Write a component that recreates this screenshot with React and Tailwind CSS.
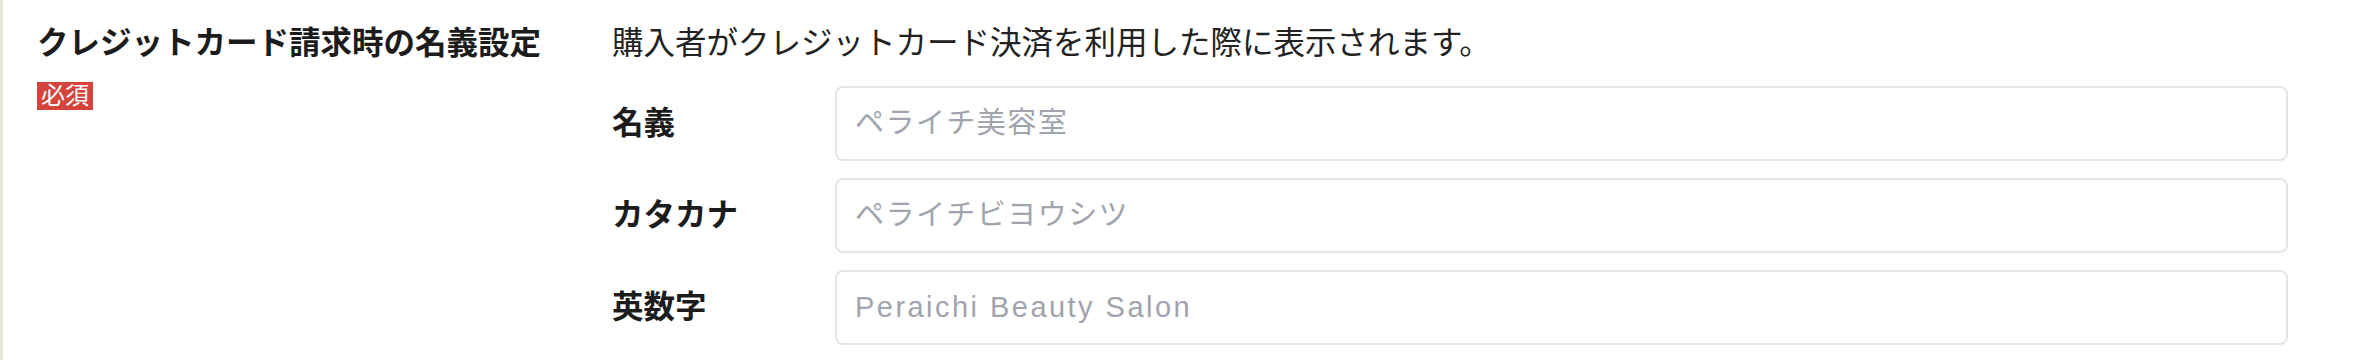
export default function App() {
  const rows = [
    { label: "名義", placeholder: "ペライチ美容室", track: "tracking-[0.05em]" },
    { label: "カタカナ", placeholder: "ペライチビヨウシツ", track: "tracking-[0.05em]" },
    { label: "英数字", placeholder: "Peraichi Beauty Salon", track: "tracking-[0.085em]" },
  ];

  return (
    <div className="flex w-full h-[360px] bg-white border-l-[3px] border-[#e6e6df] pr-[84px] font-['Liberation_Sans','Noto_Sans_CJK_JP',sans-serif] text-[#1c1c1c]">
      {/* 見出し */}
      <div className="w-[609px] shrink-0 pl-[34px] pt-[19px]">
        <h2 className="text-[31.5px] font-bold leading-[48px]">クレジットカード請求時の名義設定</h2>
        <span className="inline-block mt-[15px] bg-[#d5443b] text-white text-[24px] leading-[28px] px-[4px]">必須</span>
      </div>

      {/* フォーム */}
      <div className="flex-1 pt-[19px]">
        <p className="text-[31.5px] leading-[48px] text-[#222]">
          購入者がクレジットカード決済を利用した際に表示されます。
        </p>
        <div className="mt-[19px] flex flex-col gap-[17px]">
          {rows.map((r) => (
            <div key={r.label} className="flex items-center">
              <label className="w-[223px] shrink-0 text-[31.5px] font-bold">{r.label}</label>
              <input
                type="text"
                placeholder={r.placeholder}
                className={`flex-1 h-[75px] border-2 border-[#e4e4ea] rounded-[8px] px-[18px] text-[29px] ${r.track} outline-none placeholder:text-[#a0a4ad]`}
              />
            </div>
          ))}
        </div>
      </div>
    </div>
  );
}
